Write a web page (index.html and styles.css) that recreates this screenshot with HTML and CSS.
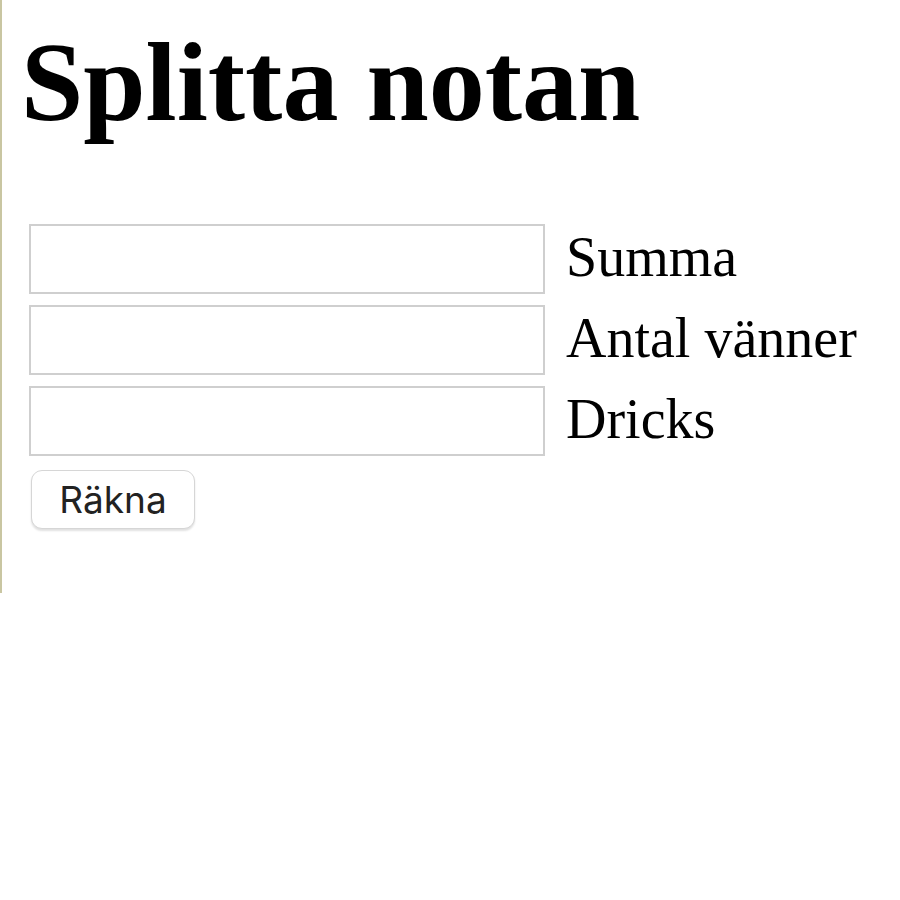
FILE: index.html
```html
<!DOCTYPE html>
<html lang="sv">
<head>
<meta charset="utf-8">
<title>Splitta notan</title>
<link rel="stylesheet" href="styles.css">
</head>
<body>
<div class="page">
  <h1 class="title">Splitta notan</h1>
  <form class="form">
    <div class="row">
      <input class="field" type="text">
      <label class="label">Summa</label>
    </div>
    <div class="row">
      <input class="field" type="text">
      <label class="label">Antal vänner</label>
    </div>
    <div class="row">
      <input class="field" type="text">
      <label class="label">Dricks</label>
    </div>
    <button class="btn" type="button">Räkna</button>
  </form>
</div>
</body>
</html>
```
FILE: styles.css
```css
html, body {
  margin: 0;
  padding: 0;
  background: #ffffff;
}
.page {
  box-sizing: border-box;
  height: 593px;
  border-left: 2px solid #c9c6a2;
  padding-left: 19px;
  padding-top: 18px;
}
.title {
  margin: 0;
  font-family: "Liberation Serif", "Times New Roman", serif;
  font-weight: bold;
  font-size: 112px;
  line-height: normal;
  color: #000;
}
.form {
  margin-top: 77px;
  margin-left: 8px;
  display: flex;
  flex-direction: column;
  align-items: flex-start;
  gap: 11px;
}
.row {
  display: flex;
  align-items: center;
}
.field {
  box-sizing: border-box;
  width: 516px;
  height: 70px;
  margin: 0;
  border: 2px solid #cfcfcf;
  background: #fff;
  padding: 0;
}
.label {
  margin-left: 21px;
  margin-bottom: 4px;
  font-family: "Liberation Serif", "Times New Roman", serif;
  font-size: 56px;
  color: #000;
  line-height: 64px;
}
.btn {
  box-sizing: border-box;
  margin-top: 3px;
  margin-left: 2px;
  width: 164px;
  height: 59px;
  border: 1px solid #d6d6d6;
  border-radius: 11px;
  background: #fff;
  box-shadow: 0 2px 2px rgba(0, 0, 0, 0.12);
  font-family: Inter, "Liberation Sans", sans-serif;
  font-size: 37px;
  color: #222;
  padding: 0;
}
```
